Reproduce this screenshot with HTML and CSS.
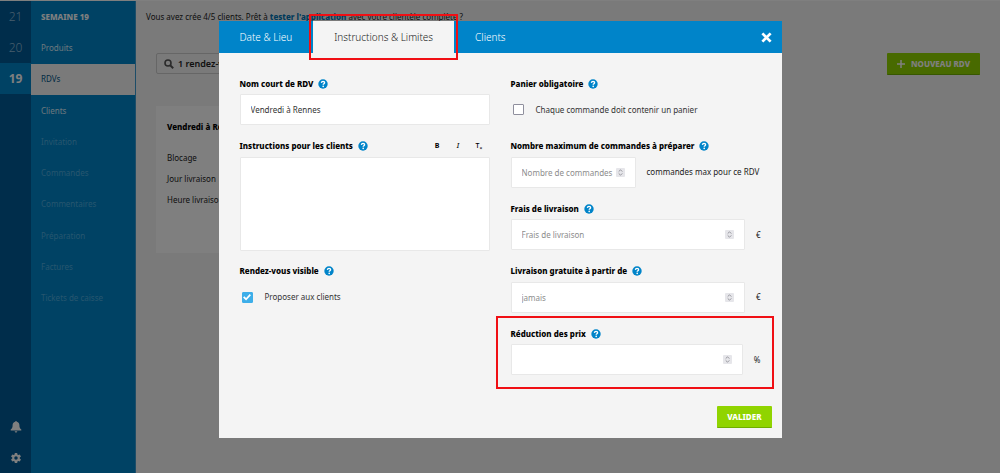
FILE: index.html
```
<!DOCTYPE html>
<html lang="fr">
<head>
<meta charset="utf-8">
<title>Rendez-vous</title>
<link rel="stylesheet" href="styles.css">
</head>
<body>
<svg class="sprite" aria-hidden="true">
  <symbol id="help" viewBox="0 0 10 10"><circle cx="5" cy="5" r="4.7" fill="#0084c9"/><path d="M3.4 3.9C3.5 2.9 4.2 2.4 5 2.4c.9 0 1.6.5 1.6 1.3C6.600 4.700 5.200 4.700 5.200 5.800" fill="none" stroke="#fff" stroke-width="1.4"/><circle cx="5.200" cy="7.400" r=".8" fill="#fff"/></symbol>
  <symbol id="stepper" viewBox="0 0 9 9"><rect width="9" height="9" rx="1" fill="#e6e6ea"/><path d="M2.700 3.600 4.500 1.800l1.800 1.800M2.700 5.400l1.800 1.800 1.800-1.800" fill="none" stroke="#8c8c94" stroke-width=".9"/></symbol>
</svg>

<div class="app">
  <nav class="weeks" aria-label="Semaines">
    <div class="weeks-list">
      <a href="#">21</a>
      <a href="#">20</a>
      <a href="#" class="current">19</a>
    </div>
    <div class="weeks-tools">
      <button type="button" aria-label="Notifications"><svg viewBox="0 0 12 12"><path d="M6 0c.5 0 .8.3.8.8 1.700.4 2.600 1.700 2.600 3.400 0 2.200.5 3.300 1.900 4.300v.9H.7v-.9C2.100 7.500 2.600 6.400 2.600 4.200c0-1.700.9-3 2.600-3.400C5.200.3 5.500 0 6 0zM4.700 10.300h2.600C7.200 11.100 6.700 11.500 6 11.500s-1.200-.4-1.300-1.200z"/></svg></button>
      <button type="button" aria-label="Réglages"><svg viewBox="0 0 24 24"><path d="M19.400 13a7.500 7.500 0 0 0 0-2l2.500-1.900-2.400-4.200-3 1.200a7.500 7.500 0 0 0-1.700-1L14.400 2H9.600l-.4 3.100a7.500 7.500 0 0 0-1.700 1l-3-1.200-2.400 4.200L4.600 11a7.500 7.500 0 0 0 0 2l-2.500 1.900 2.400 4.200 3-1.200c.5.4 1.100.7 1.700 1l.4 3.100h4.800l.4-3.100c.6-.3 1.200-.6 1.700-1l3 1.200 2.400-4.200zM12 15.500a3.500 3.500 0 1 1 0-7 3.500 3.500 0 0 1 0 7z"/></svg></button>
    </div>
  </nav>

  <nav class="menu" aria-label="Menu principal">
    <div class="menu-list">
      <strong>SEMAINE 19</strong>
      <a href="#">Produits</a>
      <a href="#" class="current">RDVs</a>
      <a href="#">Clients</a>
      <a href="#" class="off">Invitation</a>
      <a href="#" class="off">Commandes</a>
      <a href="#" class="off">Commentaires</a>
      <a href="#" class="off">Préparation</a>
      <a href="#" class="off">Factures</a>
      <a href="#" class="off">Tickets de caisse</a>
    </div>
  </nav>

  <main class="page">
    <p class="notice">Vous avez crée 4/5 clients. Prêt à <a href="#">tester l'application</a> avec votre clientèle complète ?</p>
    <div class="toolbar">
      <label class="search">
        <svg viewBox="0 0 10 10" aria-hidden="true"><circle cx="4" cy="4" r="3" fill="none" stroke="#555" stroke-width="1.600"/><path d="M6.200 6.200 9.200 9.200" stroke="#555" stroke-width="2"/></svg>
        <input type="text" value="1 rendez-vous" aria-label="Rechercher">
      </label>
      <button type="button" class="btn"><svg viewBox="0 0 8 8" aria-hidden="true"><path d="M4 0v8M0 4h8" stroke="#fff" stroke-width="1.500"/></svg>NOUVEAU RDV</button>
    </div>
    <article class="card">
      <h2>Vendredi à Rennes</h2>
      <p>Blocage</p>
      <p>Jour livraison</p>
      <p>Heure livraison</p>
    </article>
  </main>
</div>

<div class="overlay">
  <section class="modal" role="dialog" aria-label="Rendez-vous">
    <header class="tabs">
      <button type="button" class="tab">Date &amp; Lieu</button>
      <button type="button" class="tab active">Instructions &amp; Limites</button>
      <button type="button" class="tab">Clients</button>
      <button type="button" class="close" aria-label="Fermer"><svg viewBox="0 0 12 12"><path d="M1.500 1.500l9 9M10.500 1.500l-9 9" stroke="#fff" stroke-width="3"/></svg></button>
    </header>
    <form>
      <div class="fields">
        <div class="field left">
          <div class="label"><label for="name">Nom court de RDV</label><svg class="help"><use href="#help"/></svg></div>
          <input class="box" id="name" type="text" value="Vendredi à Rennes">
        </div>
        <div class="field right">
          <div class="label"><span>Panier obligatoire</span><svg class="help"><use href="#help"/></svg></div>
          <label class="check"><input type="checkbox">Chaque commande doit contenir un panier</label>
        </div>
        <div class="field left tall">
          <div class="label"><label for="text">Instructions pour les clients</label><svg class="help"><use href="#help"/></svg>
            <div class="format"><button type="button" aria-label="Gras"><b>B</b></button><button type="button" aria-label="Italique"><i>I</i></button><button type="button" aria-label="Effacer le format">T<sub>×</sub></button></div>
          </div>
          <textarea class="box" id="text"></textarea>
        </div>
        <div class="field right">
          <div class="label"><label for="max">Nombre maximum de commandes à préparer</label><svg class="help"><use href="#help"/></svg></div>
          <div class="line"><div class="number half"><input class="box" id="max" type="number" placeholder="Nombre de commandes"><svg><use href="#stepper"/></svg></div><span>commandes max pour ce RDV</span></div>
        </div>
        <div class="field right">
          <div class="label"><label for="fee">Frais de livraison</label><svg class="help"><use href="#help"/></svg></div>
          <div class="line"><div class="number"><input class="box" id="fee" type="number" placeholder="Frais de livraison"><svg><use href="#stepper"/></svg></div><span>€</span></div>
        </div>
        <div class="field left">
          <div class="label"><span>Rendez-vous visible</span><svg class="help"><use href="#help"/></svg></div>
          <label class="check"><input type="checkbox" checked>Proposer aux clients</label>
        </div>
        <div class="field right">
          <div class="label"><label for="free">Livraison gratuite à partir de</label><svg class="help"><use href="#help"/></svg></div>
          <div class="line"><div class="number"><input class="box" id="free" type="number" placeholder="jamais"><svg><use href="#stepper"/></svg></div><span>€</span></div>
        </div>
        <div class="field right marked">
          <div class="label"><label for="cut">Réduction des prix</label><svg class="help"><use href="#help"/></svg></div>
          <div class="line"><div class="number"><input class="box" id="cut" type="number"><svg><use href="#stepper"/></svg></div><span>%</span></div>
        </div>
      </div>
      <div class="actions"><button type="submit" class="btn">VALIDER</button></div>
    </form>
  </section>
</div>
</body>
</html>
```
FILE: styles.css
```
* { box-sizing: border-box; }
body {
  margin: 0;
  font: 400 8px/16px "Noto Sans", "Open Sans", sans-serif;
  color: #222;
}
button, input, textarea { font: inherit; color: inherit; border: 0; padding: 0; margin: 0; background: none; }
a { color: inherit; text-decoration: none; }
p, h2 { margin: 0; }
.sprite { position: absolute; width: 0; height: 0; }

.app { display: flex; min-height: 100vh; background: #f4f4f4; border-top: 1px solid #fff; }
.weeks { display: flex; flex-direction: column; justify-content: space-between; width: 31px; background: #005b96; color: #fff; }
.weeks-list a { display: flex; align-items: center; justify-content: center; height: 31px; font-size: 12px; font-weight: 300; color: #8fb9d6; }
.weeks-list .current { background: #0084c9; color: #fff; font-weight: 700; }
.weeks-tools button { display: flex; align-items: center; justify-content: center; width: 100%; height: 31px; }
.weeks-tools svg { width: 12px; height: 12px; fill: #fff; }

.menu { width: 105px; background: #0084c9; color: #d9eef9; border-right: 1px solid #3a9bd0; }
.menu-list { display: grid; grid-auto-rows: 1fr; height: 313px; }
.menu-list > * { display: flex; align-items: center; padding: 0 10px; }
.menu-list strong { font-weight: 800; color: #fff; }
.menu-list .current { background: #f4f4f4; color: #00568a; }
.menu-list .off { color: #4dacdd; }

.page { flex: 1; padding: 8px 20px; }
.notice { margin: 0 -10px; }
.notice a { color: #0075b5; font-weight: 800; }
.toolbar { display: flex; justify-content: space-between; margin-top: 28px; }
.search { display: flex; align-items: center; gap: 4px; width: 200px; height: 21px; padding: 0 7px; border: 1px solid #ccc; border-radius: 2px; }
.search svg { width: 10px; height: 10px; }
.search input { flex: 1; min-width: 0; font-size: 9px; font-weight: 600; color: #222; }
.btn { display: flex; align-items: center; gap: 6px; height: 22px; padding: 0 10px; border-radius: 1px; background: #90d400; border-bottom: 1px solid #6fae00; color: #fff; font-weight: 800; }
.btn svg { width: 8px; height: 8px; }
.card { width: 220px; height: 147px; margin-top: 31px; padding: 13px 11px; background: #fff; }
.card h2 { font-size: 8px; line-height: 16px; font-weight: 800; color: #000; margin-bottom: 15px; }
.card p { margin-bottom: 5px; }

.overlay { position: fixed; inset: 0; padding-top: 21px; background: rgba(0, 0, 0, .5); }
.modal { width: 100%; max-width: 563px; margin: 0 auto; background: #f4f4f4; }
.tabs { display: flex; height: 32px; padding-right: 10px; background: #0084c9; color: #fff; }
.tab { padding: 0 21px; font-size: 10px; font-weight: 300; }
.tab.active { position: relative; background: #f4f4f4; color: #222; }
.tab.active::after { content: ""; position: absolute; inset: -7px -4px; border: 2px solid #f00f14; }
.close { margin-left: auto; }
.close svg { display: block; width: 11px; height: 11px; }

.fields { display: grid; grid-template-columns: 1fr 1fr; grid-auto-rows: 1fr; grid-auto-flow: dense; gap: 0 21px; height: 333px; padding: 20px 21px 0; }
.field { display: flex; flex-direction: column; padding-bottom: 10px; }
.left { grid-column: 1; }
.right { grid-column: 2; }
.tall { grid-row: span 2; }
.label { display: flex; align-items: center; gap: 5px; height: 21px; font-weight: 800; color: #000; }
.help { width: 10px; height: 10px; }
.format { display: flex; margin-left: auto; }
.format button { width: 21px; font: 500 7px/10px "Noto Sans", sans-serif; }
.format sub { font-size: 5px; line-height: 1; }
.box { display: block; width: 100%; height: 31px; padding: 0 10px; background: #fff; border: 1px solid #e8e8e8; border-radius: 1px; color: #333; }
.box::placeholder { color: #8c8c8c; opacity: 1; }
textarea.box { flex: 1; resize: none; }
.line { display: flex; align-items: center; gap: 11px; white-space: nowrap; }
.number { position: relative; flex: 1; }
.half { flex: 0 0 50%; }
.number input { appearance: textfield; }
.number input::-webkit-inner-spin-button { display: none; }
.number svg { position: absolute; right: 11px; top: 11px; width: 9px; height: 9px; }
.check { display: flex; align-items: center; gap: 12px; height: 31px; padding-left: 2px; color: #333; }
.check input { appearance: none; width: 11px; height: 11px; background: #fff; border: 1px solid #8f8f9d; border-radius: 1px; }
.check input:checked { background: #3daee9; border-color: #3daee9; }
.check input:checked::before { content: ""; display: block; width: 9px; height: 9px; background: #fff; clip-path: polygon(6% 53%, 20% 38%, 40% 59%, 80% 14%, 94% 28%, 40% 86%); }
.marked { position: relative; }
.marked::after { content: ""; position: absolute; inset: -7px -13px -3px -15px; border: 2px solid #f00f14; pointer-events: none; }
.actions { display: flex; justify-content: flex-end; padding: 20px 10px 10px; }
```
